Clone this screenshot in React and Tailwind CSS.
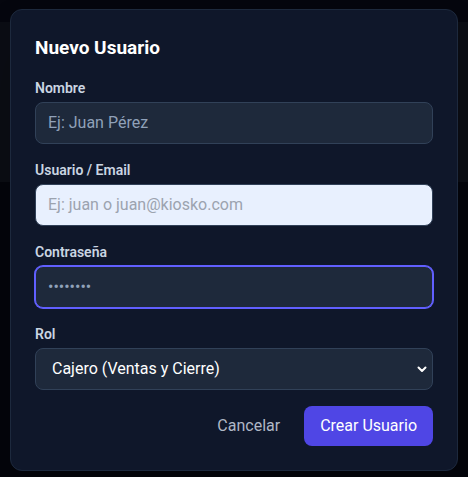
import React, { useState } from 'react';

const Field = ({ label, children }) => (
  <div>
    <label className="block text-sm font-semibold text-slate-300 mb-1">{label}</label>
    {children}
  </div>
);

export default function App() {
  const [rol, setRol] = useState('cajero');

  return (
    <div
      className="min-h-screen w-full bg-[linear-gradient(to_bottom,#05060e_0,#05060e_22px,#0b0d14_22px,#0b0d14_182px,#04050b_182px)] px-[10px] pt-[9px] font-['Roboto',sans-serif]"
    >
      <div className="w-full max-w-md rounded-xl border border-slate-800 bg-[#0f172a] p-6 shadow-2xl">
        {/* Header */}
        <h3 className="mb-4 text-[19px] font-bold leading-7 text-white">Nuevo Usuario</h3>

        {/* Form */}
        <form className="space-y-4" onSubmit={(e) => e.preventDefault()}>
          <Field label="Nombre">
            <input
              type="text"
              placeholder="Ej: Juan Pérez"
              className="w-full rounded-lg border border-slate-700 bg-[#1e293b] px-3 py-2 text-base text-white placeholder:text-slate-400 outline-none"
            />
          </Field>

          <Field label="Usuario / Email">
            <input
              type="text"
              placeholder="Ej: juan o juan@kiosko.com"
              className="w-full rounded-lg border border-slate-700 bg-[#e8f0fe] px-3 py-2 text-base text-slate-900 placeholder:text-[#9ca3af] outline-none"
            />
          </Field>

          <Field label="Contraseña">
            <input
              type="password"
              placeholder="••••••••"
              className="w-full rounded-lg border border-indigo-500 bg-[#1e293b] px-3 py-2 text-base text-white ring-1 ring-indigo-500 placeholder:text-slate-400 outline-none"
            />
          </Field>

          <Field label="Rol">
            <div className="relative">
              <select
                value={rol}
                onChange={(e) => setRol(e.target.value)}
                className="w-full appearance-none rounded-lg border border-slate-700 bg-[#1e293b] py-2 pl-4 pr-10 text-base text-white outline-none"
              >
                <option value="cajero">Cajero (Ventas y Cierre)</option>
                <option value="admin">Administrador</option>
              </select>
              <svg
                className="pointer-events-none absolute right-[5px] top-1/2 -translate-y-1/2"
                width="12"
                height="12"
                viewBox="0 0 12 12"
                fill="none"
              >
                <path d="M2.5 4.5L6 8l3.5-3.5" stroke="white" strokeWidth="2" strokeLinecap="round" strokeLinejoin="round" />
              </svg>
            </div>
          </Field>

          <div className="flex justify-end gap-2">
            <button type="button" className="rounded-lg px-4 py-2 text-base text-[#b0b8c6]">
              Cancelar
            </button>
            <button type="submit" className="rounded-lg bg-[#4f46e5] px-4 py-2 text-base text-white">
              Crear Usuario
            </button>
          </div>
        </form>
      </div>
    </div>
  );
}
